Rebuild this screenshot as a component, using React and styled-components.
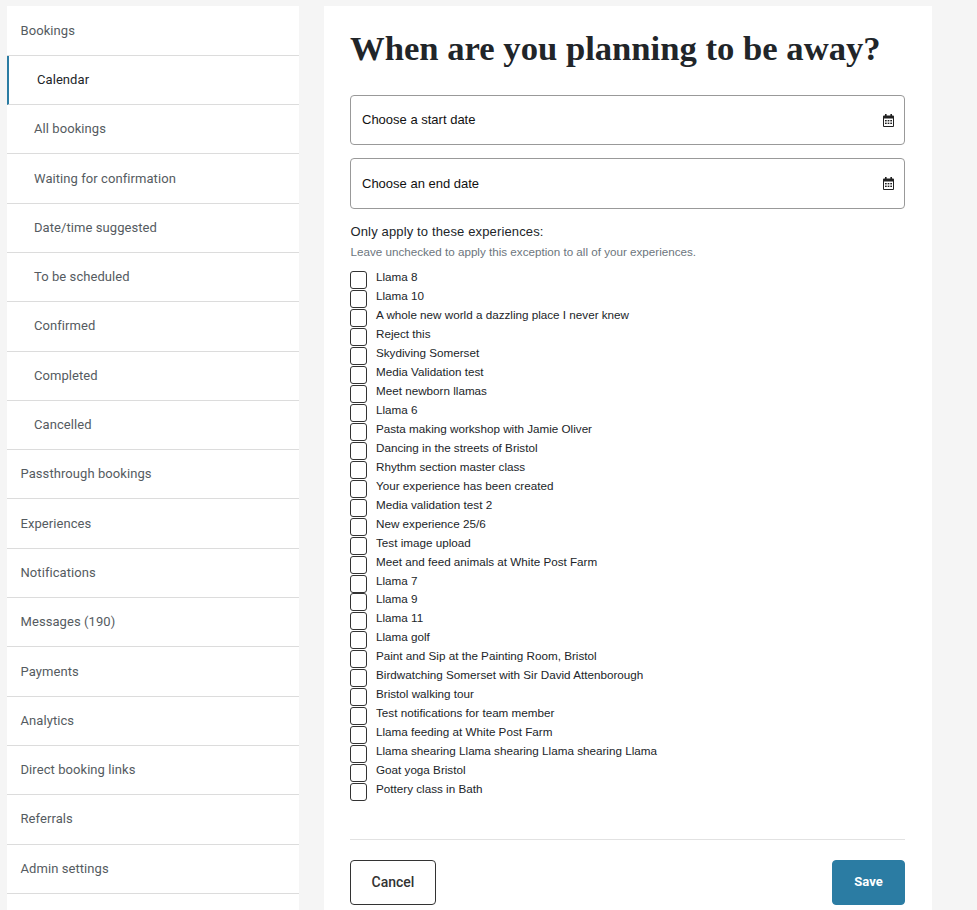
import React from "react";
import styled, { createGlobalStyle } from "styled-components";

const Global = createGlobalStyle`
  html, body { margin: 0; padding: 0; background: #f5f5f5; overflow: hidden; }
  body { font-family: Roboto, "Liberation Sans", Arial, sans-serif; }
  * { box-sizing: border-box; }
`;

const Page = styled.div`
  display: flex;
  align-items: flex-start;
  gap: 25px;
  height: 910px;
  overflow: hidden;
  padding: 6px 0 0 7px;
`;

const Sidebar = styled.nav`
  flex: 0 0 292px;
  height: 904px;
  padding-top: 0.5px;
  background: #fff;
  display: flex;
  flex-direction: column;
`;

const NavItem = styled.a`
  flex: 0 0 49.3px;
  display: flex;
  align-items: center;
  padding-left: ${(p) => (p.$active ? "28px" : p.$sub ? "27px" : "13.5px")};
  padding-bottom: 1px;
  border-bottom: 1px solid #dcdcdc;
  border-left: ${(p) => (p.$active ? "2px solid #2b7ca3" : "none")};
  color: ${(p) => (p.$active ? "#212529" : "#555b61")};
  font-size: 13px;
  letter-spacing: 0.07px;
`;

const Card = styled.main`
  flex: 0 0 608px;
  height: 904px;
  background: #fff;
  padding: 22px 27px 0 26px;
  display: flex;
  flex-direction: column;
`;

const Title = styled.h1`
  margin: 0 0 26px;
  font-family: "Liberation Serif", "DejaVu Serif", serif;
  font-size: 34.65px;
  line-height: 41px;
  font-weight: 700;
  color: #212529;
  white-space: nowrap;
`;

const DateField = styled.div`
  height: ${(p) => p.$h}px;
  margin-bottom: ${(p) => p.$mb}px;
  border: 1px solid #999;
  border-radius: 4px;
  display: flex;
  align-items: center;
  justify-content: space-between;
  padding: 0 10.5px ${(p) => p.$pb}px 11px;
  font-family: "Liberation Sans", Arial, sans-serif;
  font-size: 13px;
  color: #111;
`;

const CalendarSvg = styled.svg`
  width: 11px;
  height: 13px;
  margin-top: ${(p) => p.$mt}px;
  flex: none;
`;

const CalendarIcon = ({ $mt }) => (
  <CalendarSvg $mt={$mt} viewBox="0 0 11 13" aria-hidden="true">
    <rect x="2" y="0" width="1.6" height="3" fill="#222" />
    <rect x="7.4" y="0" width="1.6" height="3" fill="#222" />
    <path d="M1 1.5h9a1 1 0 0 1 1 1V12a1 1 0 0 1-1 1H1a1 1 0 0 1-1-1V2.5a1 1 0 0 1 1-1z" fill="#222" />
    <rect x="1" y="4.5" width="9" height="7.5" fill="#fff" />
    <g fill="#222">
      <rect x="2" y="6" width="1.7" height="1.4" />
      <rect x="4.65" y="6" width="1.7" height="1.4" />
      <rect x="7.3" y="6" width="1.7" height="1.4" />
      <rect x="2" y="8.6" width="1.7" height="1.4" />
      <rect x="4.65" y="8.6" width="1.7" height="1.4" />
      <rect x="7.3" y="8.6" width="1.7" height="1.4" />
    </g>
  </CalendarSvg>
);

const Label = styled.div`
  padding-left: 0.5px;
  font-family: "Liberation Sans", Arial, sans-serif;
  font-size: 13px;
  line-height: 15px;
  color: #212529;
  letter-spacing: 0.14px;
`;

const Hint = styled.div`
  padding-left: 0.5px;
  margin-top: 5px;
  margin-bottom: 11px;
  font-family: "Liberation Sans", Arial, sans-serif;
  font-size: 11.65px;
  line-height: 15px;
  color: #6c757d;
`;

const List = styled.div`
  display: flex;
  flex-direction: column;
`;

const Row = styled.label`
  height: 18.97px;
  display: flex;
  align-items: flex-start;
  gap: 9px;
  font-family: "Liberation Sans", Arial, sans-serif;
  font-size: 11.68px;
  line-height: 14px;
  color: #212529;
  white-space: nowrap;
`;

const Box = styled.span`
  flex: 0 0 17px;
  width: 17px;
  height: 18px;
  margin-top: 1px;
  border: 1px solid #333;
  border-radius: 3px;
  background: #fff;
`;

const Divider = styled.hr`
  margin: 38px 0 20px;
  border: 0;
  border-top: 1px solid #e2e2e2;
`;

const Actions = styled.div`
  display: flex;
  justify-content: space-between;
`;

const Button = styled.button`
  height: 45px;
  width: ${(p) => p.$w}px;
  border-radius: 4px;
  border: 1px solid ${(p) => (p.$primary ? "#2b7ca3" : "#333")};
  background: ${(p) => (p.$primary ? "#2b7ca3" : "#fff")};
  color: ${(p) => (p.$primary ? "#fff" : "#333")};
  font-family: Roboto, "Liberation Sans", sans-serif;
  font-size: ${(p) => (p.$primary ? "13px" : "14px")};
  font-weight: ${(p) => (p.$primary ? 700 : 500)};
  padding: 0 0 2px;
`;

const nav = [
  ["Bookings"],
  ["Calendar", "active"],
  ["All bookings", "sub"],
  ["Waiting for confirmation", "sub"],
  ["Date/time suggested", "sub"],
  ["To be scheduled", "sub"],
  ["Confirmed", "sub"],
  ["Completed", "sub"],
  ["Cancelled", "sub"],
  ["Passthrough bookings"],
  ["Experiences"],
  ["Notifications"],
  ["Messages (190)"],
  ["Payments"],
  ["Analytics"],
  ["Direct booking links"],
  ["Referrals"],
  ["Admin settings"],
];

const experiences = [
  "Llama 8",
  "Llama 10",
  "A whole new world a dazzling place I never knew",
  "Reject this",
  "Skydiving Somerset",
  "Media Validation test",
  "Meet newborn llamas",
  "Llama 6",
  "Pasta making workshop with Jamie Oliver",
  "Dancing in the streets of Bristol",
  "Rhythm section master class",
  "Your experience has been created",
  "Media validation test 2",
  "New experience 25/6",
  "Test image upload",
  "Meet and feed animals at White Post Farm",
  "Llama 7",
  "Llama 9",
  "Llama 11",
  "Llama golf",
  "Paint and Sip at the Painting Room, Bristol",
  "Birdwatching Somerset with Sir David Attenborough",
  "Bristol walking tour",
  "Test notifications for team member",
  "Llama feeding at White Post Farm",
  "Llama shearing Llama shearing Llama shearing Llama",
  "Goat yoga Bristol",
  "Pottery class in Bath",
];

export default function App() {
  return (
    <>
      <Global />
      <Page>
        <Sidebar>
          {nav.map(([t, k]) => (
            <NavItem key={t} $active={k === "active"} $sub={k === "sub"}>
              {t}
            </NavItem>
          ))}
        </Sidebar>
        <Card>
          <Title>When are you planning to be away?</Title>
          <DateField $h={50} $mb={13} $pb={2}>
            Choose a start date
            <CalendarIcon $mt={2} />
          </DateField>
          <DateField $h={51} $mb={15} $pb={0}>
            Choose an end date
            <CalendarIcon $mt={0} />
          </DateField>
          <Label>Only apply to these experiences:</Label>
          <Hint>Leave unchecked to apply this exception to all of your experiences.</Hint>
          <List>
            {experiences.map((e) => (
              <Row key={e}>
                <Box />
                {e}
              </Row>
            ))}
          </List>
          <Divider />
          <Actions>
            <Button $w={86}>Cancel</Button>
            <Button $w={73} $primary>Save</Button>
          </Actions>
        </Card>
      </Page>
    </>
  );
}
